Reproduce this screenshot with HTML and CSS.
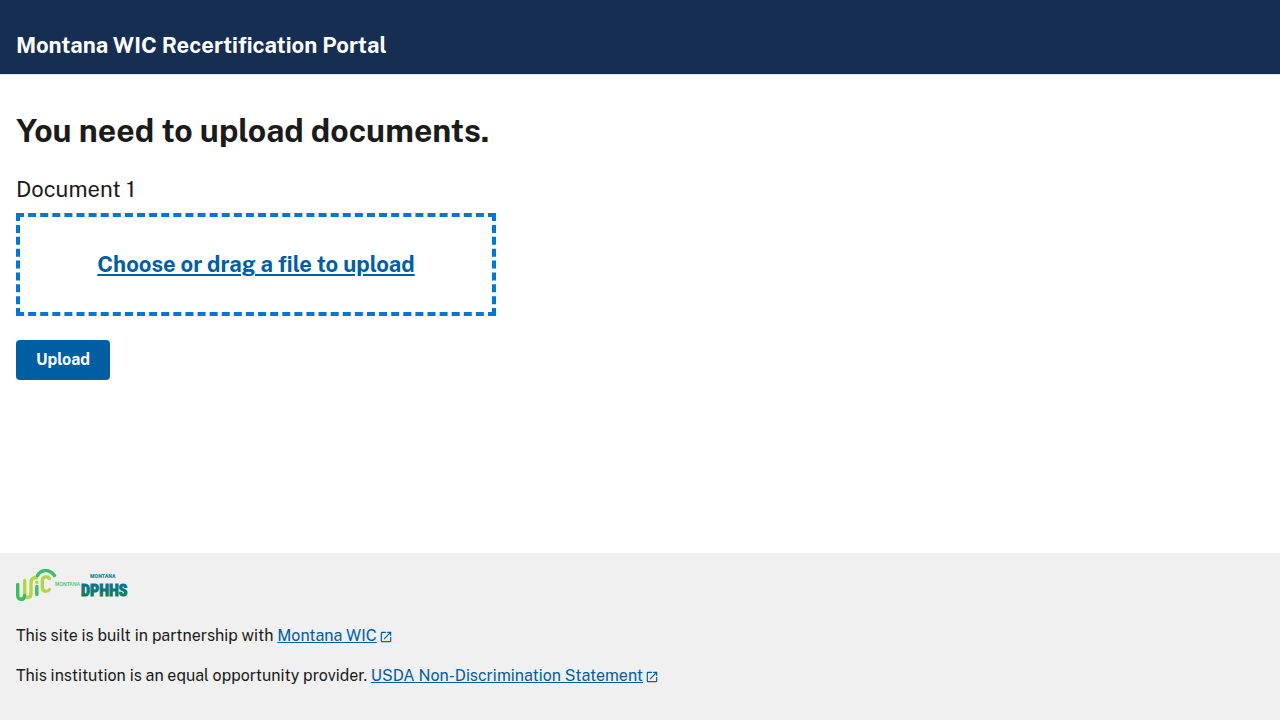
FILE: index.html
```html
<!DOCTYPE html>
<html lang="en">
<head>
<meta charset="utf-8">
<meta name="viewport" content="width=device-width, initial-scale=1">
<title>Montana WIC Recertification Portal</title>
<link rel="stylesheet" href="styles.css">
</head>
<body>
<header class="header">
  <div class="header-title">Montana WIC Recertification Portal</div>
</header>
<main class="main">
  <h1 class="heading">You need to upload documents.</h1>
  <form class="upload-form">
    <label class="field-label" for="document-1">Document 1</label>
    <div class="drop-target">
      <span class="drop-text">Choose or drag a file to upload</span>
      <input class="file-input" id="document-1" type="file">
    </div>
    <button class="button" type="button">Upload</button>
  </form>
</main>
<footer class="footer">
  <svg class="logo" viewBox="0 0 112 32" role="img" aria-label="Montana WIC and Montana DPHHS">
    <defs>
      <linearGradient id="dphhs" x1="0" y1="0" x2="0" y2="1">
        <stop offset="0.3" stop-color="#08748a"/>
        <stop offset="0.8" stop-color="#078052"/>
      </linearGradient>
    </defs>
    <g fill="none" stroke-linecap="round" stroke-width="3.4">
      <path stroke="#3bbf63" d="M1.700 15.500V26Q1.700 30.300 6 30.300"/>
      <path stroke="#b2d645" d="M8.700 11.500V25.500Q8.700 28.500 11.700 28.500Q15 28.500 15 25V13Q15 8.800 20.500 8.500"/>
      <path stroke="#3bbf63" d="M8.400 26.500Q8.400 30.300 5.500 30.300"/>
      <path stroke="#3bbf63" d="M20.800 17.500V25.500"/>
      <path stroke="#b2d645" d="M33.500 9.500Q31 7 28.200 8.200Q26.300 9 26.300 12V18Q26.300 22.300 30 22.300Q32 22.300 33.500 20.500"/>
      <path stroke="#3bbf63" d="M21.500 6.500C25 0 34 0 38.300 6.500"/>
    </g>
    <circle cx="20.800" cy="13.200" r="1.700" fill="#b2d645"/>
    <text class="logo-small" x="39" y="17" fill="#58c779">MONTANA</text>
    <text class="logo-medium" x="74" y="9" fill="#23798a">MONTANA</text>
    <text class="logo-large" x="65" y="27" fill="url(#dphhs)" stroke="url(#dphhs)">DPHHS</text>
  </svg>
  <p class="footer-line">This site is built in partnership with <a class="link" href="#">Montana WIC</a><svg class="external" viewBox="0 0 24 24" aria-hidden="true"><path d="M19 19H5V5h7V3H5a2 2 0 0 0-2 2v14a2 2 0 0 0 2 2h14c1.100 0 2-.9 2-2v-7h-2v7zM14 3v2h3.590l-9.830 9.830 1.410 1.410L19 6.410V10h2V3h-7z"/></svg></p>
  <p class="footer-line">This institution is an equal opportunity provider. <a class="link" href="#">USDA Non-Discrimination Statement</a><svg class="external" viewBox="0 0 24 24" aria-hidden="true"><path d="M19 19H5V5h7V3H5a2 2 0 0 0-2 2v14a2 2 0 0 0 2 2h14c1.100 0 2-.9 2-2v-7h-2v7zM14 3v2h3.590l-9.830 9.830 1.410 1.410L19 6.410V10h2V3h-7z"/></svg></p>
</footer>
</body>
</html>
```
FILE: styles.css
```css
* { box-sizing: border-box; }

body {
  margin: 0;
  min-height: 100vh;
  display: flex;
  flex-direction: column;
  background: #fff;
  color: #1b1b1b;
  font-family: "Public Sans", Inter, Roboto, sans-serif;
  font-size: 16px;
  line-height: 24px;
}

.header {
  padding: 32px 16px 16px;
  background: #162e51;
  border-bottom: 1px solid #dfe1e2;
}

.header-title {
  color: #fff;
  font-size: 22px;
  font-weight: 700;
  line-height: 26px;
}

.main {
  flex: 1;
  padding: 32px 16px;
}

.heading {
  margin: 0;
  font-size: 32px;
  font-weight: 700;
  line-height: 48px;
}

.upload-form {
  max-width: 480px;
  margin-top: 20px;
}

.field-label {
  display: block;
  font-size: 22px;
  line-height: 28px;
}

.drop-target {
  position: relative;
  margin-top: 10px;
  padding: 32px 16px;
  border: 4px dashed #0076d6;
  text-align: center;
}

.drop-text {
  display: block;
  color: #005ea2;
  font-size: 22px;
  font-weight: 700;
  line-height: 31px;
  text-decoration: underline;
}

.file-input {
  position: absolute;
  inset: 0;
  width: 100%;
  height: 100%;
  opacity: 0;
  cursor: pointer;
}

.button {
  margin-top: 24px;
  padding: 12px 20px;
  border: 0;
  border-radius: 4px;
  background: #005ea2;
  color: #fff;
  font-family: inherit;
  font-size: 16px;
  font-weight: 700;
  line-height: 16px;
}

.footer {
  padding: 16px 16px 32px;
  background: #f0f0f0;
}

.logo {
  display: block;
  width: 112px;
  height: 32px;
}

.logo-small { font: 700 5px "Liberation Sans", sans-serif; }
.logo-medium { font: 700 6px "Roboto Condensed", "Liberation Sans Narrow", "Liberation Sans", sans-serif; }
.logo-large { font: 700 16px "Roboto Condensed", "Open Sans Condensed", "Liberation Sans Narrow", sans-serif; }

.footer-line { margin: 16px 0 0; }
.logo + .footer-line { margin-top: 23px; }

.link {
  color: #005ea2;
  text-decoration: underline;
}

.external {
  width: 14px;
  height: 14px;
  margin-left: 2px;
  vertical-align: -3px;
  fill: #005ea2;
}
```
